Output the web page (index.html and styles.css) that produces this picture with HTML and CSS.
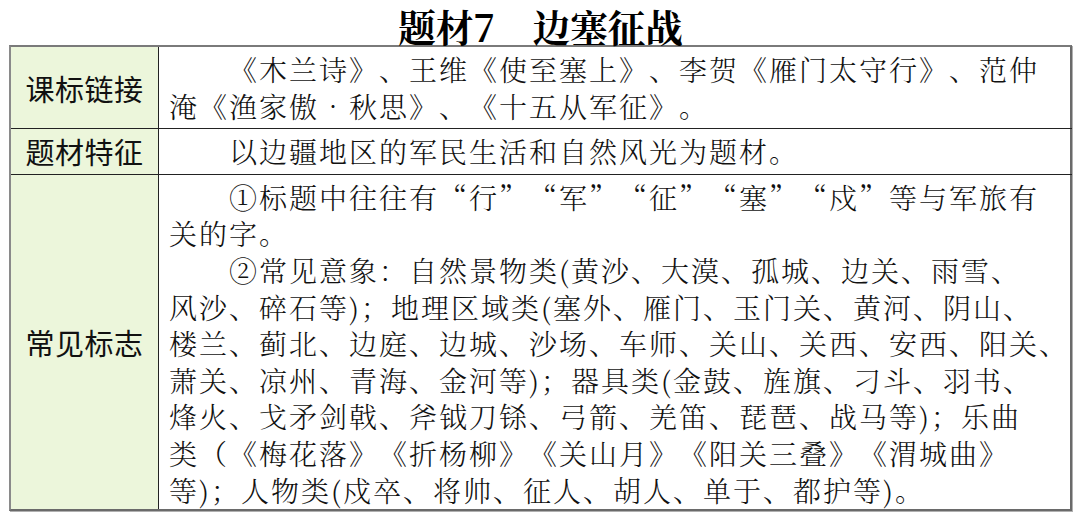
FILE: index.html
```html
<!DOCTYPE html>
<html lang="zh-CN">
<head>
<meta charset="utf-8">
<link rel="stylesheet" href="styles.css">
</head>
<body>
<div class="page">
  <h1 class="title">题材7　边塞征战</h1>
  <div class="table">
    <div class="label">课标链接</div>
    <div class="content">
      <div class="ln ind">《木兰诗》、王维《使至塞上》、李贺《雁门太守行》、范仲</div>
      <div class="ln">淹《渔家傲•秋思》、《十五从军征》。</div>
    </div>
    <div class="label">题材特征</div>
    <div class="content">
      <div class="ln ind">以边疆地区的军民生活和自然风光为题材。</div>
    </div>
    <div class="label last">常见标志</div>
    <div class="content last">
      <div class="ln ind">①标题中往往有“行”“军”“征”“塞”“戍”等与军旅有</div>
      <div class="ln">关的字。</div>
      <div class="ln ind">②常见意象：自然景物类(黄沙、大漠、孤城、边关、雨雪、</div>
      <div class="ln">风沙、碎石等)；地理区域类(塞外、雁门、玉门关、黄河、阴山、</div>
      <div class="ln">楼兰、蓟北、边庭、边城、沙场、车师、关山、关西、安西、阳关、</div>
      <div class="ln">萧关、凉州、青海、金河等)；器具类(金鼓、旌旗、刁斗、羽书、</div>
      <div class="ln">烽火、戈矛剑戟、斧钺刀铩、弓箭、羌笛、琵琶、战马等)；乐曲</div>
      <div class="ln">类（《梅花落》《折杨柳》《关山月》《阳关三叠》《渭城曲》</div>
      <div class="ln">等)；人物类(戍卒、将帅、征人、胡人、单于、都护等)。</div>
    </div>
  </div>
</div>
</body>
</html>
```

FILE: styles.css
```css
* { box-sizing: border-box; }
html, body {
  margin: 0;
  padding: 0;
  background: #ffffff;
}
body {
  width: 1080px;
  height: 515px;
  overflow: hidden;
  color: #111;
  font-family: "Noto Serif CJK SC", "Noto Sans CJK SC", serif;
  text-spacing-trim: space-all;
}
.page {
  padding: 0 0 0 9px;
}
.title {
  margin: 0 0 -7px 0;
  width: 1063px;
  height: 52px;
  text-align: center;
  font-family: "Noto Serif CJK SC", "Noto Sans CJK SC", serif;
  font-weight: 700;
  font-size: 37.5px;
  line-height: 52px;
  color: #000;
}
.table {
  display: grid;
  grid-template-columns: 148px 1fr;
  width: 1063px;
  border-top: 2px solid #7a7a7a;
  border-left: 2px solid #8a8a8a;
  border-right: 2px solid #6a6a6a;
  border-bottom: 2px solid #6a6a6a;
  box-shadow: 1px 1px 0 #b0b0b0;
}
.label {
  background: #ecf6db;
  border-right: 1px solid #222;
  border-bottom: 1px solid #222;
  display: flex;
  align-items: center;
  justify-content: center;
  font-family: "Noto Sans CJK SC", sans-serif;
  font-size: 29px;
  color: #111;
  letter-spacing: 0.5px;
}
.content {
  border-bottom: 1px solid #222;
  padding: 4px 3px 4px 10px;
}
.label.last, .content.last {
  border-bottom: none;
}
.content.last {
  padding-bottom: 1px;
}
.ln {
  white-space: nowrap;
  font-size: 28px;
  line-height: 36.6px;
  letter-spacing: 2px;
  font-weight: 300;
}
.ind {
  text-indent: 60px;
}
```
